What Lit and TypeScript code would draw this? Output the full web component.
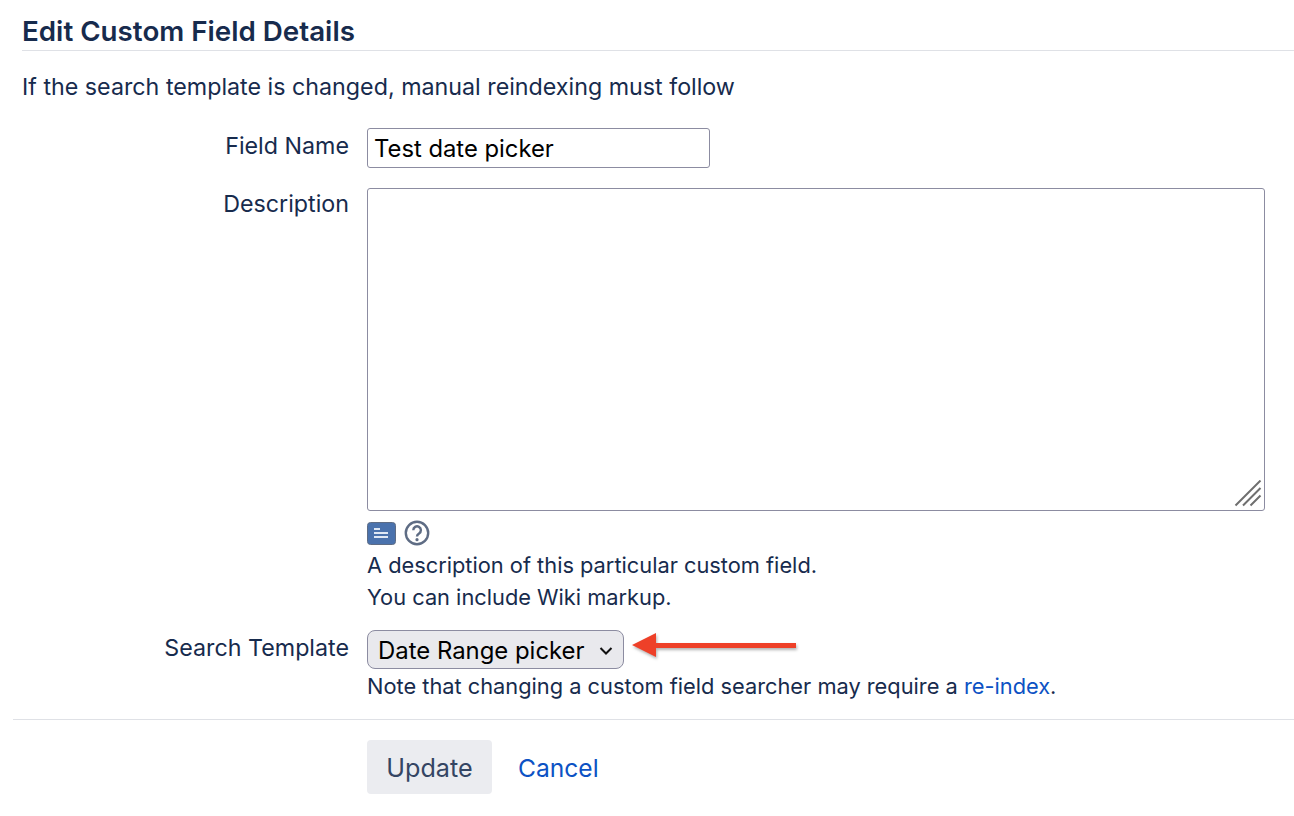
import { LitElement, html, css } from "lit";
import { customElement } from "lit/decorators.js";

@customElement("app-root")
export class AppRoot extends LitElement {
  static styles = css`
    :host { display: block; height: 816px; background: #fff; color: #172b4d; font-family: Inter, "Liberation Sans", sans-serif; font-size: 23.25px; overflow: hidden; }
    .page { padding: 13px 0 0 0; }
    .title { margin: 0 0 0 22px; height: 37px; border-bottom: 1px solid #dfe1e6; font-size: 27.75px; font-weight: 600; line-height: 37px; color: #172b4d; }
    .intro { margin: 22px 0 0 22px; line-height: 28px; height: 28px; }
    .row { display: grid; grid-template-columns: 349px 1fr; column-gap: 18px; }
    .label { text-align: right; line-height: 28px; }
    .row-name { margin-top: 27px; }
    .row-name .label { padding-top: 4px; }
    .row-desc { margin-top: 20px; }
    .row-desc .label { padding-top: 2px; }
    .row-search { margin-top: 16px; }
    .row-search .label { padding-top: 5px; }
    .input { box-sizing: border-box; width: 343px; height: 40px; border: 1px solid #8c8ca1; border-radius: 3px; padding: 0 6px; display: flex; align-items: center; color: #000; background: #fff; font-size: 23.8px; }
    .textarea { box-sizing: border-box; width: 898px; height: 323px; border: 1px solid #8c8ca1; border-radius: 3px; background: #fff; display: flex; justify-content: flex-end; align-items: flex-end; }
    .icons { display: flex; align-items: center; gap: 8px; margin-top: 9px; height: 26px; }
    .help { line-height: 32px; font-size: 21.8px; }
    .help-first { margin-top: 3px; }
    .select-wrap { position: relative; height: 40px; }
    .select { box-sizing: border-box; width: 257px; height: 39px; margin-top: 1px; border: 1px solid #8c8ca1; border-radius: 8px; background: #e9e9ed; color: #000; display: flex; align-items: center; padding: 2px 10px 0; justify-content: space-between; font-size: 23.9px; }
    .arrow { position: absolute; left: 265px; top: 0; filter: drop-shadow(1px 2px 1.5px rgba(0, 0, 0, 0.3)); overflow: visible; }
    .note { margin-top: 1px; line-height: 31px; font-size: 21.8px; }
    a { color: #0c52c4; text-decoration: none; }
    .actions-rule { height: 1px; background: #dfe1e6; margin: 17px 0 0 13px; }
    .actions { display: flex; align-items: center; margin: 20px 0 0 367px; gap: 26px; }
    .btn { box-sizing: border-box; width: 125px; height: 54px; padding-top: 2px; background: #ebecf0; border-radius: 4px; color: #344563; display: flex; align-items: center; justify-content: center; font-size: 25.2px; }
    .cancel { padding-top: 2px; font-size: 24.6px; }
    svg { display: block; }
  `;

  render() {
    return html`
      <div class="page">
        <h1 class="title">Edit Custom Field Details</h1>
        <div class="intro">If the search template is changed, manual reindexing must follow</div>

        <div class="row row-name">
          <div class="label">Field Name</div>
          <div class="input">Test date picker</div>
        </div>

        <div class="row row-desc">
          <div class="label">Description</div>
          <div>
            <div class="textarea">
              <svg width="30" height="30" viewBox="0 0 30 30">
                <path d="M1.5 25.5L26.5 0.5M9 25.5L26.5 8M16.5 25.5L26.5 15.5" stroke="#6f6f6f" stroke-width="2" fill="none"/>
              </svg>
            </div>
            <div class="icons">
              <svg width="29" height="23" viewBox="0 0 29 23">
                <rect x="0.5" y="0.5" width="28" height="22" rx="3" fill="#4a72ad" stroke="#5e6c84"/>
                <path d="M7 7h6M7 11h14M7 15h14" stroke="#dfe8f5" stroke-width="2"/>
              </svg>
              <svg width="26" height="26" viewBox="0 0 26 26">
                <circle cx="13" cy="13" r="11.2" fill="none" stroke="#5e6c84" stroke-width="2.4"/>
                <path d="M9.3 10.2a3.8 3.8 0 1 1 5.8 3.2c-1.3.8-2.1 1.5-2.1 3" fill="none" stroke="#5e6c84" stroke-width="2.4"/>
                <circle cx="13" cy="19.7" r="1.6" fill="#5e6c84"/>
              </svg>
            </div>
            <div class="help help-first">A description of this particular custom field.</div>
            <div class="help">You can include Wiki markup.</div>
          </div>
        </div>

        <div class="row row-search">
          <div class="label">Search Template</div>
          <div>
            <div class="select-wrap">
              <div class="select">
                <span>Date Range picker</span>
                <svg width="14" height="10" viewBox="0 0 14 10"><path d="M1.5 2l5.5 5.5L12.5 2" fill="none" stroke="#111" stroke-width="2"/></svg>
              </div>
              <svg class="arrow" width="170" height="34" viewBox="0 0 170 34">
                <path d="M24 13H164V18H24V27L0 15L24 3Z" fill="#ee4028"/>
              </svg>
            </div>
            <div class="note">Note that changing a custom field searcher may require a <a href="#">re-index</a>.</div>
          </div>
        </div>

        <div class="actions-rule"></div>
        <div class="actions">
          <div class="btn">Update</div>
          <a class="cancel" href="#">Cancel</a>
        </div>
      </div>
    `;
  }
}
